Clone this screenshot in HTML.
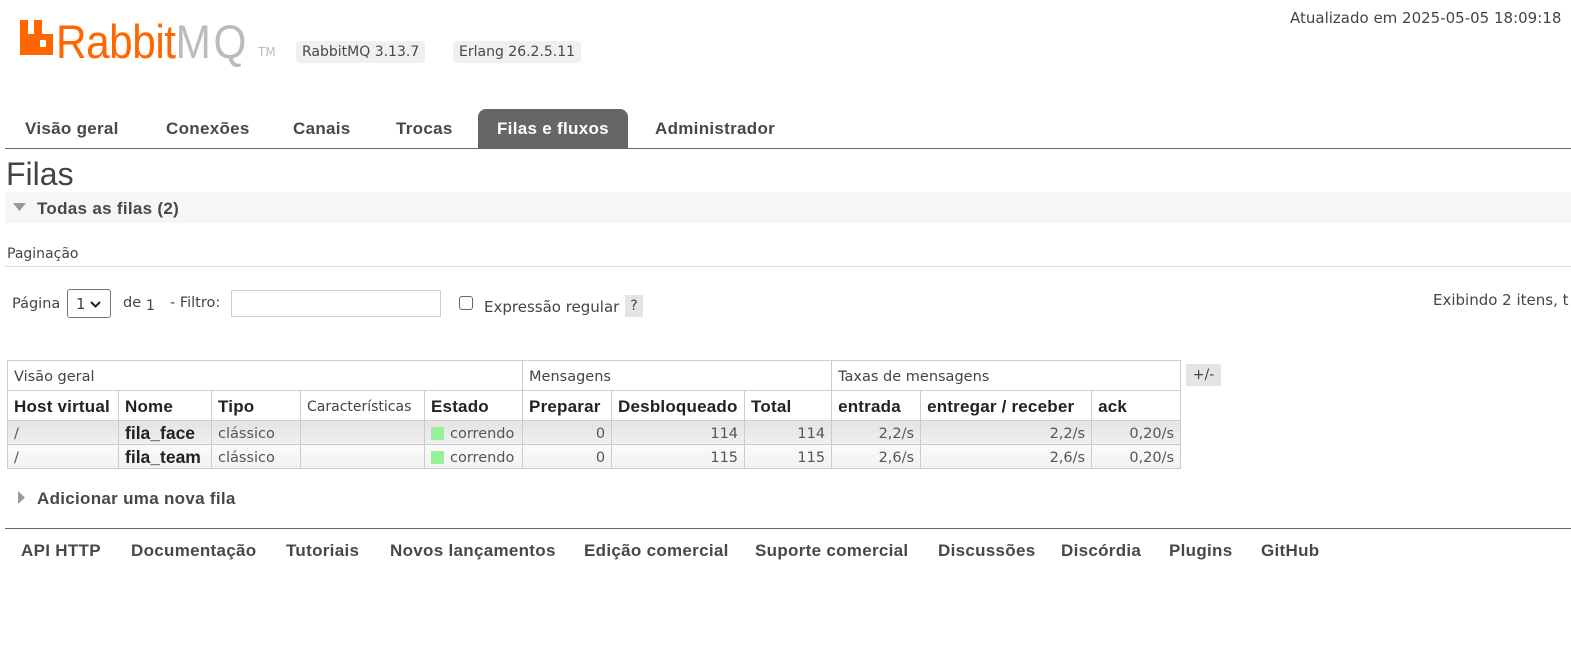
<!DOCTYPE html>
<html><head><meta charset="utf-8"><style>
*{margin:0;padding:0;box-sizing:border-box}
body{width:1571px;height:655px;position:relative;overflow:hidden;background:#fff;font-family:"DejaVu Sans","Liberation Sans",sans-serif;color:#444;font-size:13px}
.a{position:absolute;white-space:nowrap}
.b{font-family:"Liberation Sans",sans-serif;font-weight:bold;font-size:17px;letter-spacing:0.3px;color:#484848}
.pill{position:absolute;background:#f0f0f0;border-radius:4px;height:22px;line-height:22px;padding:0 6px;font-size:14px;color:#484848}
table{position:absolute;left:7px;top:360px;border-collapse:collapse;table-layout:fixed;width:1173px}
td{border:1px solid #ccc;white-space:nowrap;overflow:hidden;padding:2px 6px 0;font-size:14.5px}
tr.h td{height:30px}
tr.h2 td{height:30px;font-family:"Liberation Sans",sans-serif;font-weight:bold;font-size:17px;letter-spacing:0.2px;color:#222}
tr.r1 td{height:24px;background:linear-gradient(#e4e4e4,#f0f0f0);color:#555}
tr.r2 td{height:23px;background:linear-gradient(#fafafa,#f2f2f2);color:#555}
.n{text-align:right}
.nm{font-family:"Liberation Sans",sans-serif;font-weight:bold;font-size:17.5px!important;color:#222!important}
.g{display:inline-block;width:13px;height:13px;background:#98f098;vertical-align:-2px;margin-right:6px}
</style></head><body>
<svg class="a" style="left:20px;top:20px" width="33" height="35" viewBox="0 0 33 35"><path d="M0 0h8v14h6V0h8v14h11v21H0z M20 20v7h6v-7z" fill="#f60" fill-rule="evenodd"/></svg>
<div class="a" style="left:56px;top:14px;font-family:'Liberation Sans',sans-serif;font-size:47px;transform:scaleX(0.9);transform-origin:left"><span style="color:#f60;letter-spacing:-0.5px">Rabbit</span><span style="color:#bbb;letter-spacing:3px">MQ</span></div>
<div class="a" style="left:258px;top:45px;font-size:12px;color:#bbb">TM</div>
<div class="pill" style="left:296px;top:41px">RabbitMQ 3.13.7</div>
<div class="pill" style="left:453px;top:41px">Erlang 26.2.5.11</div>
<div class="a" style="left:1290px;top:9px;font-size:15px">Atualizado em 2025-05-05 18:09:18</div>
<div class="a" style="left:478px;top:109px;width:150px;height:39px;background:#666;border-radius:8px 8px 0 0"></div>
<div class="a b" style="left:25px;top:119px">Visão geral</div>
<div class="a b" style="left:166px;top:119px">Conexões</div>
<div class="a b" style="left:293px;top:119px">Canais</div>
<div class="a b" style="left:396px;top:119px">Trocas</div>
<div class="a b" style="left:497px;top:119px;color:#fff">Filas e fluxos</div>
<div class="a b" style="left:655px;top:119px">Administrador</div>
<div class="a" style="left:5px;top:148px;width:1566px;height:1px;background:#666"></div>
<div class="a" style="left:6px;top:156px;font-size:32px;font-family:'Liberation Sans',sans-serif;color:#444">Filas</div>
<div class="a" style="left:5px;top:192px;width:1566px;height:31px;background:#f6f6f6"></div>
<svg class="a" style="left:13px;top:203px" width="14" height="9"><path d="M0 0h13L6.5 8z" fill="#999"/></svg>
<div class="a b" style="left:37px;top:199px">Todas as filas (2)</div>
<div class="a" style="left:7px;top:246px;font-size:14px">Paginação</div>
<div class="a" style="left:5px;top:266px;width:1566px;height:1px;background:#ddd"></div>
<div class="a" style="left:12px;top:296px;font-size:14.5px">Página</div>
<div class="a" style="left:67px;top:289px;width:44px;height:29px;border:1px solid #767676;border-radius:3px;font-size:15px;padding:5px 0 0 8px">1 <svg width="11" height="8" viewBox="0 0 11 8"><path d="M1 1l4.5 4.5L10 1" stroke="#222" stroke-width="2" fill="none"/></svg></div>
<div class="a" style="left:123px;top:295px;font-size:14.5px">de <span style="position:relative;top:3px">1</span></div>
<div class="a" style="left:170px;top:295px;font-size:14.5px">- Filtro:</div>
<div class="a" style="left:231px;top:290px;width:210px;height:27px;border:1px solid #ccc"></div>
<div class="a" style="left:459px;top:296px;width:14px;height:14px;border:1px solid #666;border-radius:3px"></div>
<div class="a" style="left:484px;top:298px;font-size:15px">Expressão regular</div>
<div class="a" style="left:625px;top:295px;width:18px;height:22px;background:#e4e4e4;text-align:center;line-height:22px;font-size:14px">?</div>
<div class="a" style="left:1433px;top:291px;font-size:15px">Exibindo 2 itens, t</div>
<table>
<colgroup><col style="width:111px"><col style="width:93px"><col style="width:89px"><col style="width:124px"><col style="width:98px"><col style="width:89px"><col style="width:133px"><col style="width:87px"><col style="width:89px"><col style="width:171px"><col style="width:89px"></colgroup>
<tr class="h"><td colspan="5">Visão geral</td><td colspan="3">Mensagens</td><td colspan="3">Taxas de mensagens</td></tr>
<tr class="h2"><td>Host virtual</td><td>Nome</td><td>Tipo</td><td style="font-family:'DejaVu Sans',sans-serif;font-weight:normal;font-size:14px;letter-spacing:0;color:#444">Características</td><td>Estado</td><td>Preparar</td><td>Desbloqueado</td><td>Total</td><td>entrada</td><td>entregar / receber</td><td>ack</td></tr>
<tr class="r1"><td>/</td><td class="nm">fila_face</td><td>clássico</td><td></td><td><span class="g"></span>correndo</td><td class="n">0</td><td class="n">114</td><td class="n">114</td><td class="n">2,2/s</td><td class="n">2,2/s</td><td class="n">0,20/s</td></tr>
<tr class="r2"><td>/</td><td class="nm">fila_team</td><td>clássico</td><td></td><td><span class="g"></span>correndo</td><td class="n">0</td><td class="n">115</td><td class="n">115</td><td class="n">2,6/s</td><td class="n">2,6/s</td><td class="n">0,20/s</td></tr>
</table>
<div class="a" style="left:1186px;top:364px;width:35px;height:22px;background:#e4e4e4;text-align:center;line-height:22px;font-size:14px">+/-</div>
<svg class="a" style="left:18px;top:491px" width="8" height="13"><path d="M0 0l7 6.5L0 13z" fill="#999"/></svg>
<div class="a b" style="left:37px;top:489px">Adicionar uma nova fila</div>
<div class="a" style="left:5px;top:528px;width:1566px;height:1px;background:#666"></div>
<div class="a b" style="left:21px;top:541px">API HTTP</div>
<div class="a b" style="left:131px;top:541px">Documentação</div>
<div class="a b" style="left:286px;top:541px">Tutoriais</div>
<div class="a b" style="left:390px;top:541px">Novos lançamentos</div>
<div class="a b" style="left:584px;top:541px">Edição comercial</div>
<div class="a b" style="left:755px;top:541px">Suporte comercial</div>
<div class="a b" style="left:938px;top:541px">Discussões</div>
<div class="a b" style="left:1061px;top:541px">Discórdia</div>
<div class="a b" style="left:1169px;top:541px">Plugins</div>
<div class="a b" style="left:1261px;top:541px">GitHub</div>
</body></html>
